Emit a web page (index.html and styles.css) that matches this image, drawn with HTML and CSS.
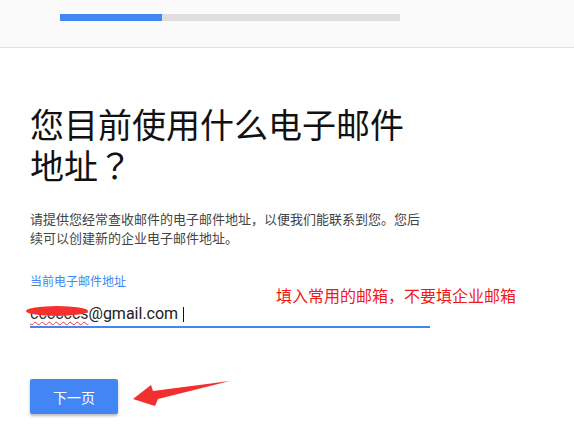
FILE: index.html
```html
<!DOCTYPE html>
<html lang="zh-CN">
<head>
<meta charset="utf-8">
<title>电子邮件地址</title>
<link rel="stylesheet" href="styles.css">
</head>
<body>
<header class="top">
  <div class="progress"><div class="fill"></div></div>
</header>
<main class="content">
  <h1 class="title" lang="zh-Hant">您目前使用什么电子邮件地址？</h1>
  <p class="desc">请提供您经常查收邮件的电子邮件地址，以便我们能联系到您。您后续可以创建新的企业电子邮件地址。</p>
  <div class="field">
    <div class="label">当前电子邮件地址</div>
    <div class="input"><span class="user">ccccccs</span>@gmail.com<span class="caret"></span></div>
    <span class="blob"></span>
    <div class="note">填入常用的邮箱，不要填企业邮箱</div>
  </div>
  <div class="actions">
    <button class="btn" type="button">下一页</button>
    <svg class="arrow" viewBox="130 378 102 30" width="102" height="30" aria-hidden="true">
      <polygon points="133,399 151,385 153,391 230,381 158,399 155,406" fill="#f0302f"/>
    </svg>
  </div>
</main>
</body>
</html>
```
FILE: styles.css
```css
* { box-sizing: border-box; }
html, body { margin: 0; padding: 0; background: #fff; }
body {
  font-family: "Noto Sans CJK SC", "Noto Sans", sans-serif;
  color: #212121;
  width: 574px;
  height: 438px;
  overflow: hidden;
}
.top {
  height: 48px;
  background: #fafafa;
  border-bottom: 1px solid #e0e0e0;
  padding: 14px 0 0 60px;
}
.progress {
  width: 340px;
  height: 7px;
  background: #dedede;
}
.fill {
  width: 102px;
  height: 7px;
  background: #4285f4;
}
.content {
  padding: 0 30px;
}
.title {
  margin: 55px 0 0;
  width: 400px;
  font-family: "Noto Sans CJK TC", "Noto Sans CJK SC", sans-serif;
  font-size: 34px;
  line-height: 41px;
  font-weight: 400;
  color: #111;
}
.desc {
  margin: 24px 0 0;
  width: 400px;
  font-size: 13px;
  line-height: 19px;
  color: #444;
}
.field {
  position: relative;
  margin-top: 26px;
  width: 400px;
}
.label {
  font-size: 12px;
  line-height: 16px;
  color: #4285f4;
}
.input {
  margin-top: 15px;
  display: flex;
  align-items: center;
  height: 24px;
  padding-bottom: 2px;
  border-bottom: 2px solid #4285f4;
  font-family: Roboto, "Liberation Sans", sans-serif;
  font-size: 16px;
  line-height: 20px;
  color: #212121;
}
.user {
  text-decoration: underline wavy #e53935;
  text-decoration-thickness: 1px;
  text-underline-offset: 2px;
  color: #333;
}
.caret {
  display: inline-block;
  width: 1px;
  height: 15px;
  margin-left: 5px;
  background: #111;
}
.blob {
  position: absolute;
  left: -4px;
  top: 33px;
  width: 62px;
  height: 10px;
  border-radius: 50%;
  background: #f5302f;
}
.note {
  position: absolute;
  left: 246px;
  top: 12px;
  font-size: 16px;
  line-height: 20px;
  color: #f01818;
  white-space: nowrap;
}
.actions {
  position: relative;
  margin-top: 51px;
}
.btn {
  display: block;
  width: 88px;
  height: 35px;
  border: 0;
  border-radius: 2px;
  background: #4285f4;
  color: #fff;
  font-family: "Noto Sans CJK SC", sans-serif;
  font-size: 14px;
  box-shadow: 0 2px 3px rgba(0, 0, 0, 0.28);
  padding: 0;
}
.arrow {
  position: absolute;
  left: 100px;
  top: -1px;
}
```
